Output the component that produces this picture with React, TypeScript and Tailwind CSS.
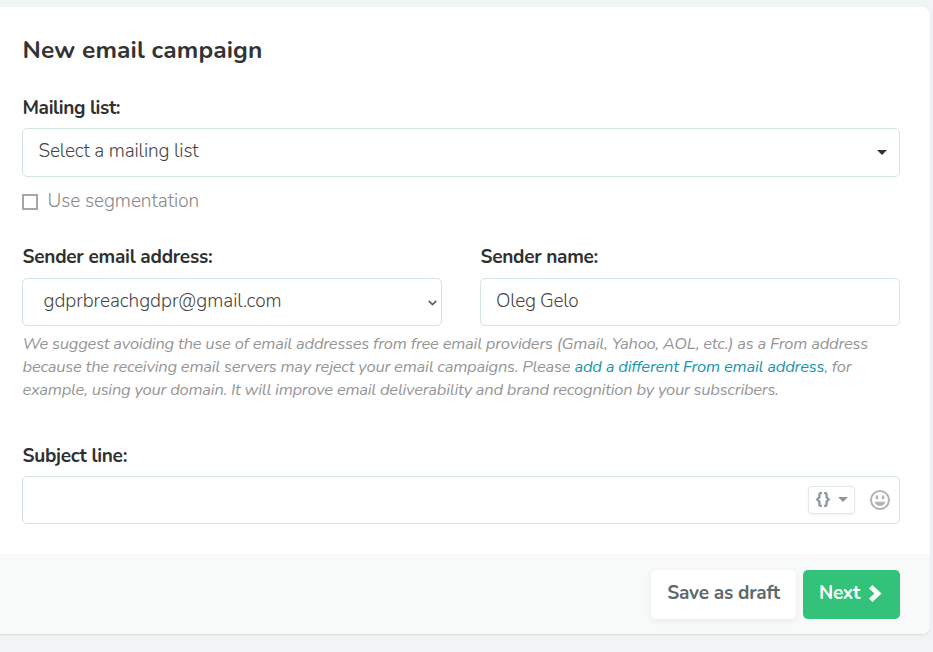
import React from "react";

const label = "block h-6 whitespace-nowrap text-[19px] leading-6 font-[680] text-[#303030] pl-[0.5px]";
const field = "flex w-full items-center rounded-[5px] border border-[#d3e4e1] bg-white text-[19px] font-[320] text-[#464646]";

function Caret({ className }: { className: string }) {
  return (
    <svg viewBox="0 0 10 5" className={className} fill="currentColor">
      <path d="M0 0h10L5 5z" />
    </svg>
  );
}

function Smiley() {
  return (
    <svg viewBox="0 0 20 20" className="h-5 w-5 text-[#b3b3b3]" fill="none">
      <circle cx="10" cy="10" r="9" stroke="currentColor" strokeWidth="2" />
      <ellipse cx="7" cy="7.4" rx="1.4" ry="2.1" fill="currentColor" />
      <ellipse cx="13" cy="7.4" rx="1.4" ry="2.1" fill="currentColor" />
      <path d="M4.6 11.8h10.8c-.7 2.7-2.8 4.3-5.4 4.3s-4.7-1.6-5.4-4.3z" fill="currentColor" />
    </svg>
  );
}

export default function App() {
  return (
    <div className="h-[652px] w-[933px] overflow-hidden bg-[#f0f4f5] pt-[7px] font-['Nunito','Lato',sans-serif]">
      <main className="flex h-[627px] w-[930px] flex-col overflow-hidden rounded-r-lg bg-white shadow-[0_1px_2px_rgba(40,70,70,0.14)]">
        <form className="h-[547px] pr-[30px] pl-[22px]" onSubmit={(e) => e.preventDefault()}>
          <h1 className="pt-[27px] pl-[0.5px] text-[24.5px] leading-8 font-[680] whitespace-nowrap text-[#333]">
            <span className="tracking-[0.13px]">New email campaign</span>
          </h1>

          <div className="pt-[30px]">
            <label className={label + " tracking-[-0.37px]"}>Mailing list:</label>
            <div className={field + " mt-2 h-[49px] justify-between pr-3 pb-[3px] pl-[15.5px]"}>
              <span className="tracking-[-0.13px]">Select a mailing list</span>
              <Caret className="mt-[3px] h-[5px] w-[10px] text-[#333]" />
            </div>
            <div className="mt-3 flex h-6 items-center gap-[9.5px] text-[19px] leading-6 font-[320] text-[#888]">
              <span className="mt-[2px] h-4 w-4 border-2 border-[#a6a6a6]" />
              <span className="tracking-[-0.05px]">Use segmentation</span>
            </div>
          </div>

          <div className="flex gap-[38px] pt-8">
            <div className="w-[420px]">
              <label className={label + " tracking-[-0.25px]"}>Sender email address:</label>
              <div className={field + " mt-[9px] h-12 justify-between pr-1 pb-[2px] pl-[20.5px]"}>
                <span className="tracking-[-0.03px]">gdprbreachgdpr@gmail.com</span>
                <svg viewBox="0 0 9 6" className="mt-[3px] h-[6px] w-[9px]" fill="none" stroke="#606060" strokeWidth="1.7">
                  <path d="M.7.8 4.5 4.6 8.3.8" />
                </svg>
              </div>
            </div>
            <div className="w-[420px]">
              <label className={label + " tracking-[-0.28px]"}>Sender name:</label>
              <div className={field + " mt-[9px] h-12 pb-[2px] pl-[15px]"}>
                <span className="tracking-[-0.28px]">Oleg Gelo</span>
              </div>
            </div>
          </div>

          <p className="h-[75px] pt-[6px] pl-[0.5px] text-[16.5px] leading-[23px] font-[370] whitespace-nowrap text-[#969696] italic">
            <span className="block tracking-[-0.235px]">We suggest avoiding the use of email addresses from free email providers (Gmail, Yahoo, AOL, etc.) as a From address</span>
            <span className="block tracking-[-0.235px]">because the receiving email servers may reject your email campaigns. Please <a className="font-normal tracking-[-0.22px] text-[#1995ab]">add a different From email address</a>, for</span>
            <span className="block tracking-[-0.25px]">example, using your domain. It will improve email deliverability and brand recognition by your subscribers.</span>
          </p>

          <div className="pt-[43px]">
            <label className={label + " tracking-[-0.27px]"}>Subject line:</label>
            <div className={field + " mt-2 h-12 justify-end gap-[15px] pr-[9px]"}>
              <div className="flex h-7 w-[47px] items-center justify-between rounded border border-[#dfe9e7] pr-[6px] pl-[7px] pb-[2px] text-[#8b999c] shadow-[0_1px_2px_rgba(40,70,70,0.08)]">
                <svg viewBox="0 0 14 15" className="h-[15px] w-[14px]" fill="none" stroke="currentColor" strokeWidth="2.3">
                  <path d="M5.9 1.1H4.9Q3.4 1.1 3.4 2.6V5.3L1.3 7.5 3.4 9.7V12.4Q3.4 13.9 4.9 13.9H5.9M8.1 1.1H9.1Q10.6 1.1 10.6 2.6V5.3L12.7 7.5 10.6 9.7V12.4Q10.6 13.9 9.1 13.9H8.1" />
                </svg>
                <Caret className="mt-[1px] h-[5px] w-[10px]" />
              </div>
              <Smiley />
            </div>
          </div>
        </form>

        <footer className="flex h-20 items-start justify-end gap-[7px] bg-[#f8faf9] pt-4 pr-[30px] text-[19px] font-bold whitespace-nowrap">
          <button className="h-[49px] w-[145px] rounded-[5px] bg-white pb-[3px] tracking-[-0.2px] text-[#5d696d] shadow-[0_2px_6px_rgba(40,70,70,0.08)]">
            Save as draft
          </button>
          <button className="flex h-[49px] w-[97px] items-center rounded-[5px] bg-[#32c27a] pb-[3px] pl-4 text-white">
            <span className="w-[50px] text-left tracking-[-0.3px]">Next</span>
            <svg viewBox="0 0 13 17" className="h-[17px] w-[13px]" fill="currentColor">
              <path d="M0 3.4 3.4 0 12.5 8.5 3.4 17 0 13.6 5.4 8.5z" />
            </svg>
          </button>
        </footer>
      </main>
    </div>
  );
}
